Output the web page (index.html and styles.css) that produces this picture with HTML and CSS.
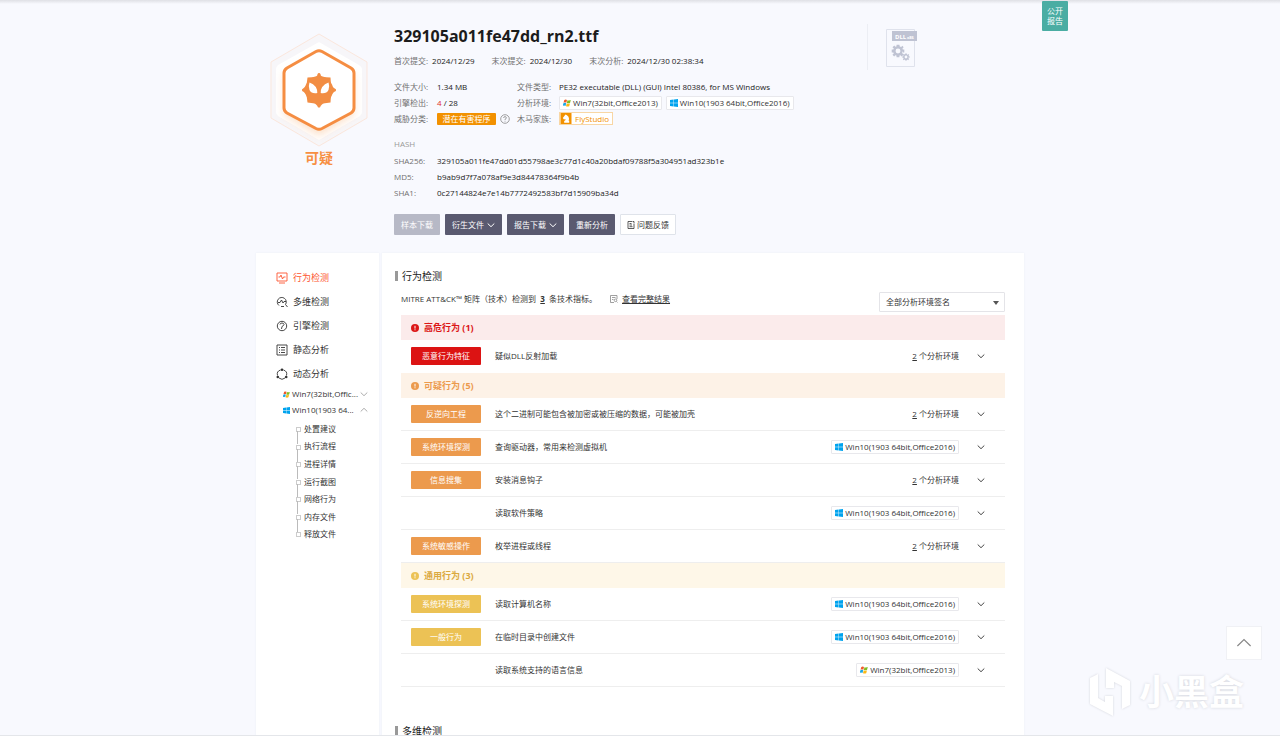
FILE: index.html
```html
<!DOCTYPE html>
<html lang="zh-CN">
<head>
<meta charset="utf-8">
<title>329105a011fe47dd_rn2.ttf</title>
<link rel="stylesheet" href="styles.css">
</head>
<body>
<svg class="defs" aria-hidden="true">
  <symbol id="down" viewBox="0 0 8 8"><path d="M.7 2.500 4 5.700 7.300 2.500" fill="none" stroke="currentColor"/></symbol>
  <symbol id="up" viewBox="0 0 8 8"><path d="M.7 5.500 4 2.300 7.300 5.500" fill="none" stroke="currentColor"/></symbol>
  <symbol id="w10" viewBox="0 0 8 8"><path fill="#00a3ee" d="M0 1.1 3.6.6V3.8H0zM4 .5 8 0V3.8H4zM0 4.2H3.6V7.4L0 6.9zM4 4.2H8V8L4 7.5z"/></symbol>
  <symbol id="w7" viewBox="0 0 8 8"><path fill="#f0582a" d="M1.3.9Q2.700 0 4 .9L3.300 3.700Q2 2.900.5 3.700z"/><path fill="#80bc22" d="M4.500 1.200Q6 1.900 7.800 1.100L7 3.900Q5.400 4.700 3.800 4z"/><path fill="#18a6e8" d="M.4 4.200Q1.900 3.400 3.200 4.200L2.500 7Q1.300 6.200-.3 7z"/><path fill="#fcb813" d="M3.700 4.500Q5.300 5.200 6.900 4.400L6.200 7.200Q4.600 8 3 7.200z"/></symbol>
  <symbol id="alert" viewBox="0 0 8 8"><circle cx="4" cy="4" r="4" fill="currentColor"/><path d="M4 1.800V4.600M4 5.300V6.300" stroke="#fff"/></symbol>
  <symbol id="gear" viewBox="-10 -10 20 20"><path fill-rule="evenodd" d="M-2-9H2L2.500-6.500 4.500-5.600 6.300-7.600 8-5.200 6.300-3.200 7-2H9V2H7L6-.1V3L7.900 5.200 5.200 7.900 3.500 6 2.200 6.600 2 9H-2L-2.300 6.600-3.800 6-5.500 7.900-7.900 5.500-6 3.700-6.700 2H-9V-2H-6.700L-6-3.700-7.900-5.300-5.300-7.900-3.700-6-2.300-6.600zM0-3.500A3.500 3.500 0 1 0 0 3.500 3.500 3.500 0 1 0 0-3.500z"/></symbol>
</svg>

<div class="page">
  <div class="wrap">
    <header class="summary">
      <div class="verdict">
        <svg class="hex" viewBox="0 0 102 120" aria-hidden="true">
          <defs><filter id="glow" x="-30%" y="-30%" width="160%" height="170%"><feGaussianBlur stdDeviation="4"/></filter></defs>
          <path d="M51 3 99 31V87L51 115 3 87V31z" fill="#f7f6f9" stroke="#fbe7dd"/>
          <path d="M51 11 91 34Q94 36 94 38V81Q94 83 92 85L51 109 10 85Q8 83 8 81V38Q8 36 10 34z" fill="#fff"/>
          <path d="M51 25 86 44V84L51 105 16 84V44z" fill="#fbd9bd" filter="url(#glow)" opacity=".8"/>
          <path d="M48 20.500Q51 19 54 20.500L83 37Q86 39 86 42V77Q86 80 83 82L54 97.500Q51 99 48 97.500L19 82Q16 80 16 77V42Q16 39 19 37z" fill="#fff" stroke="#f58d42" stroke-width="3"/>
          <path fill="#f28d43" d="M51 42 54 46 62.500 46.500 63 54 68 59 63 64 62.500 71.500 55 72.500 51 76.500 47 72.500 39.500 71.500 38.500 64 34 59 38.500 54 39.500 46.500 48 46z"/>
          <g fill="#f28d43"><circle cx="51" cy="59" r="14"/><circle cx="51" cy="43.500" r="1.500"/><circle cx="51" cy="75" r="1.500"/><circle cx="35.500" cy="59" r="1.500"/><circle cx="66.500" cy="59" r="1.500"/></g>
          <path d="M41.500 51.500Q49.500 54.500 49.300 62 43.500 63 41.500 59 40 55.500 41.500 51.500zM60.500 51.500Q52.500 54.500 52.700 62 58.500 63 60.500 59 62 55.500 60.500 51.500z" fill="#fff"/>
        </svg>
        <strong>可疑</strong>
      </div>
      <div class="info">
        <h1>329105a011fe47dd_rn2.ttf</h1>
        <dl class="dates">
          <div><dt>首次提交:</dt><dd>2024/12/29</dd></div>
          <div><dt>末次提交:</dt><dd>2024/12/30</dd></div>
          <div><dt>末次分析:</dt><dd>2024/12/30 02:38:34</dd></div>
        </dl>
        <dl class="facts">
          <dt>文件大小:</dt><dd>1.34 MB</dd>
          <dt>文件类型:</dt><dd>PE32 executable (DLL) (GUI) Intel 80386, for MS Windows</dd>
          <dt>引擎检出:</dt><dd><span class="hit">4</span> / 28</dd>
          <dt>分析环境:</dt><dd class="envs"><span class="env"><svg><use href="#w7"/></svg>Win7(32bit,Office2013)</span><span class="env"><svg><use href="#w10"/></svg>Win10(1903 64bit,Office2016)</span></dd>
          <dt>威胁分类:</dt><dd class="kind"><span class="pup">潜在有害程序</span><svg class="help" viewBox="0 0 10 10" aria-hidden="true"><circle cx="5" cy="5" r="4.300"/><path d="M3.600 4Q3.700 2.600 5 2.600T6.400 3.900Q6.400 4.700 5 5.300V6M5 6.800V7.600"/></svg></dd>
          <dt>木马家族:</dt><dd><span class="family"><svg viewBox="0 0 12 12" aria-hidden="true"><path fill="#f29100" d="M0 0H12V12H0z"/><path fill="#fff" d="M2.500 5.500 5.500 1.500 7 2.500Q9.300 3.500 9.300 6.500L8.800 8.500H9.500V10.500H4V8.500H5L5.500 6.500 3.800 7z"/></svg>FlyStudio</span></dd>
        </dl>
        <h2>HASH</h2>
        <dl class="hashes">
          <dt>SHA256:</dt><dd>329105a011fe47dd01d55798ae3c77d1c40a20bdaf09788f5a304951ad323b1e</dd>
          <dt>MD5:</dt><dd>b9ab9d7f7a078af9e3d84478364f9b4b</dd>
          <dt>SHA1:</dt><dd>0c27144824e7e14b7772492583bf7d15909ba34d</dd>
        </dl>
        <div class="actions">
          <button type="button" disabled>样本下载</button>
          <button type="button">衍生文件<svg><use href="#down"/></svg></button>
          <button type="button">报告下载<svg><use href="#down"/></svg></button>
          <button type="button">重新分析</button>
          <button type="button" class="plain"><svg viewBox="0 0 8 8" fill="none" stroke="currentColor" stroke-width=".8"><path d="M5 .5H1V7.500H7V3M2.500 2.500H4.500M2.500 4H5M2.500 5.700H5.500M5.500.5H7V2.500"/></svg>问题反馈</button>
        </div>
      </div>
      <div class="filetype">
        <svg viewBox="0 0 32 40" role="img" aria-label="DLL x86">
          <path d="M.5 1.500H28.500V38.500H.5z" fill="#f8f9fe" stroke="#dfe2ec"/>
          <path d="M6 3H31V13H6z" fill="#bfc3d3"/>
          <text x="9" y="10.500" class="dll">DLL</text><text x="21" y="10.500" class="arch">x86</text>
          <g fill="#bfc3d3"><use href="#gear" x="5" y="16" width="14" height="14"/><use href="#gear" x="16" y="25" width="8" height="8"/></g>
        </svg>
      </div>
    </header>

    <div class="body">
      <nav class="side">
        <a class="item on" href="#behavior"><svg viewBox="0 0 12 12"><path d="M1 1H11V9H1zM3 11H9M2.500 5H4L5 3 6.500 7 7.500 5H9.500"/></svg>行为检测</a>
        <a class="item" href="#multi"><svg viewBox="0 0 12 12"><path d="M3 9.500A4.500 4.500 0 1 1 9.500 8.500L11.500 11M2 6.500H4L5.500 4 7 7 8 5.500H10M5 10.500H8"/></svg>多维检测</a>
        <a class="item" href="#engine"><svg viewBox="0 0 12 12"><circle cx="6" cy="6" r="4.700"/><path d="M4 4.500Q4.200 3 6 3T8 4.500Q8 5.500 6 6.500L5.500 9"/></svg>引擎检测</a>
        <a class="item" href="#static"><svg viewBox="0 0 12 12"><path d="M1 1H11V11H1zM3 3.500H4M3 6H4M3 8.500H4M5 3.500H9M5 6H9M5 8.500H9"/></svg>静态分析</a>
        <a class="item" href="#dynamic"><svg viewBox="0 0 12 12"><path d="M4.500 2A4.500 4.500 0 0 0 1.500 7.500M7.500 2A4.500 4.500 0 0 1 10.500 7.500M3 10A4.500 4.500 0 0 0 9 10"/><g fill="currentColor" stroke="none"><circle cx="6" cy="1.800" r="1.300"/><circle cx="1.800" cy="9" r="1.300"/><circle cx="10.200" cy="9" r="1.300"/></g></svg>动态分析</a>
        <a class="os" href="#win7"><svg><use href="#w7"/></svg><span>Win7(32bit,Offic...</span><svg class="fold"><use href="#down"/></svg></a>
        <a class="os" href="#win10"><svg><use href="#w10"/></svg><span>Win10(1903 64...</span><svg class="fold"><use href="#up"/></svg></a>
        <ul class="tree">
          <li><a href="#a">处置建议</a></li><li><a href="#b">执行流程</a></li><li><a href="#c">进程详情</a></li><li><a href="#d">运行截图</a></li><li><a href="#e">网络行为</a></li><li><a href="#f">内存文件</a></li><li><a href="#g">释放文件</a></li>
        </ul>
      </nav>

      <main class="main">
        <h3 id="behavior">行为检测</h3>
        <div class="mitre">
          <p>MITRE ATT&amp;CK™ 矩阵（技术）检测到&nbsp; <b>3</b> &nbsp;条技术指标。</p>
          <a href="#matrix"><svg viewBox="0 0 8 8" fill="none" stroke="#888" stroke-width=".8"><path d="M7 4V.5H.5V7.500H4M2 2.500H5.500M2 4.500H3.500M5.500 4A1.300 1.300 0 1 0 5.500 6.600 1.300 1.300 0 1 0 5.500 4M6.500 6.500 7.500 7.500"/></svg><span>查看完整结果</span></a>
          <label class="pick"><select aria-label="分析环境签名"><option>全部分析环境签名</option></select></label>
        </div>

        <section class="high">
          <h4><svg><use href="#alert"/></svg>高危行为 (1)</h4>
          <div class="row"><span class="tag">恶意行为特征</span><p>疑似DLL反射加载</p><span class="count"><u>2</u> 个分析环境</span><button type="button" aria-label="展开"><svg><use href="#down"/></svg></button></div>
        </section>
        <section class="mid">
          <h4><svg><use href="#alert"/></svg>可疑行为 (5)</h4>
          <div class="row"><span class="tag">反逆向工程</span><p>这个二进制可能包含被加密或被压缩的数据，可能被加壳</p><span class="count"><u>2</u> 个分析环境</span><button type="button" aria-label="展开"><svg><use href="#down"/></svg></button></div>
          <div class="row"><span class="tag">系统环境探测</span><p>查询驱动器，常用来检测虚拟机</p><span class="env"><svg><use href="#w10"/></svg>Win10(1903 64bit,Office2016)</span><button type="button" aria-label="展开"><svg><use href="#down"/></svg></button></div>
          <div class="row"><span class="tag">信息搜集</span><p>安装消息钩子</p><span class="count"><u>2</u> 个分析环境</span><button type="button" aria-label="展开"><svg><use href="#down"/></svg></button></div>
          <div class="row"><p>读取软件策略</p><span class="env"><svg><use href="#w10"/></svg>Win10(1903 64bit,Office2016)</span><button type="button" aria-label="展开"><svg><use href="#down"/></svg></button></div>
          <div class="row"><span class="tag">系统敏感操作</span><p>枚举进程或线程</p><span class="count"><u>2</u> 个分析环境</span><button type="button" aria-label="展开"><svg><use href="#down"/></svg></button></div>
        </section>
        <section class="low">
          <h4><svg><use href="#alert"/></svg>通用行为 (3)</h4>
          <div class="row"><span class="tag">系统环境探测</span><p>读取计算机名称</p><span class="env"><svg><use href="#w10"/></svg>Win10(1903 64bit,Office2016)</span><button type="button" aria-label="展开"><svg><use href="#down"/></svg></button></div>
          <div class="row"><span class="tag">一般行为</span><p>在临时目录中创建文件</p><span class="env"><svg><use href="#w10"/></svg>Win10(1903 64bit,Office2016)</span><button type="button" aria-label="展开"><svg><use href="#down"/></svg></button></div>
          <div class="row"><p>读取系统支持的语言信息</p><span class="env"><svg><use href="#w7"/></svg>Win7(32bit,Office2013)</span><button type="button" aria-label="展开"><svg><use href="#down"/></svg></button></div>
        </section>
        <h3 id="multi" class="next">多维检测</h3>
      </main>
    </div>
  </div>
</div>
<div class="edge"></div>

<div class="ribbon">公开<br>报告</div>
<button type="button" class="totop" aria-label="返回顶部"><svg><use href="#up"/></svg></button>
<div class="mark">
  <svg viewBox="0 0 44 52" aria-hidden="true"><path d="M2 11 10 7V31L17 35V29H25V49L2 37zM18 1 42 14V38L34 42V19L26 15V21H18z"/></svg>
  <span>小黑盒</span>
</div>
</body>
</html>
```

FILE: styles.css
```css
* { box-sizing: border-box; margin: 0; padding: 0; }

body {
  height: 100vh;
  display: flex;
  flex-direction: column;
  overflow: hidden;
  background: #f8f9fe;
  color: #333;
  font: 8px/12px "Open Sans", "Noto Sans CJK SC", sans-serif;
}

a { color: inherit; text-decoration: none; }
ul { list-style: none; }
svg { width: 8px; height: 8px; flex: none; display: block; }
button, select { font: inherit; color: inherit; border: 0; background: none; }
.defs { position: absolute; width: 0; height: 0; }

.page {
  flex: 1;
  min-height: 0;
  overflow: hidden;
  background: linear-gradient(#dfe0e5, #f8f9fe 4px);
}
.edge { height: 2px; background: #fff; border-top: 1px solid #e4e6ea; }
.wrap { width: 60%; min-width: 740px; margin: 0 auto; }

/* Sample summary */
.summary { display: flex; padding: 24px 0 18px; }
.verdict {
  width: 126px;
  margin-right: 12px;
  padding-top: 7px;
  display: flex;
  flex-direction: column;
  align-items: center;
}
.hex { width: 102px; height: 120px; }
.verdict strong { font-size: 14px; line-height: 14px; color: #f78f42; }
.info { flex: 1; }
h1 { font-size: 16px; line-height: 24px; color: #1c1c1c; }
dt { color: #707070; }
dd { color: #222; }
.dates { display: flex; gap: 17px; margin-top: 7px; }
.dates div { display: flex; gap: 4px; }
.facts {
  display: grid;
  grid-template-columns: 43px 80px 42px 1fr;
  grid-auto-rows: 16px;
  align-items: center;
  margin-top: 12px;
}
.hit { color: #e02c2c; }
.envs, .kind { display: flex; gap: 4px; align-items: center; }
.env {
  display: inline-flex;
  align-items: center;
  gap: 2px;
  height: 14px;
  padding: 0 3px;
  border: 1px solid #e8e8ec;
  border-radius: 1px;
  background: #fff;
  color: #333;
  white-space: nowrap;
}
.pup { width: 59px; text-align: center; background: #f29100; color: #fff; border-radius: 1px; }
.help { width: 10px; height: 10px; fill: none; stroke: #888; stroke-width: .8; }
.family {
  display: inline-flex;
  gap: 3px;
  padding-right: 3px;
  border: 1px solid #f8d6a4;
  color: #f29100;
  background: #fff;
  line-height: 11px;
}
.family svg { width: 12px; height: 11px; }
h2 { font-size: 8px; line-height: 12px; font-weight: 400; color: #999; margin: 11px 0 3px; }
.hashes { display: grid; grid-template-columns: 43px 1fr; grid-auto-rows: 16px; align-items: center; }
.actions { display: flex; gap: 5px; margin-top: 13px; }
.actions button {
  display: flex;
  align-items: center;
  gap: 3px;
  height: 21px;
  padding: 0 7px;
  background: #5a5a70;
  color: #fff;
  border-radius: 1px;
  white-space: nowrap;
}
.actions button:disabled { background: #b7b9c6; }
.actions .plain { padding: 0 6px; background: #fff; color: #333; border: 1px solid #dfe3ea; gap: 2px; }
.filetype { width: 157px; height: 46px; padding: 4px 0 0 18px; border-left: 1px solid #eceef4; }
.filetype svg { width: 32px; height: 40px; }
.dll { font: 700 6px "Open Sans", sans-serif; fill: #fff; }
.arch { font: 700 4px "Open Sans", sans-serif; fill: #fff; }

/* Report */
.body { display: flex; gap: 3px; }
.side, .main { background: #fff; box-shadow: 0 0 2px #eceef6; min-height: 500px; }
.side { width: 123px; padding-top: 13px; }
.item {
  display: flex;
  align-items: center;
  gap: 5px;
  height: 24px;
  padding-left: 20px;
  font-size: 9px;
  color: #333;
}
.item svg { width: 12px; height: 12px; fill: none; stroke: currentColor; stroke-width: .9; }
.item.on { color: #fd5631; }
.os { display: flex; align-items: center; gap: 2px; height: 16px; padding: 0 11px 0 27px; color: #333; }
.os span { flex: 1; white-space: nowrap; }
.os svg { width: 7px; height: 7px; }
.os .fold { width: 8px; height: 8px; color: #888; stroke-width: .7; }
.tree {
  height: 123px;
  margin: 2px 0 0 40px;
  display: flex;
  flex-direction: column;
}
.tree li { position: relative; flex: 1; display: flex; align-items: center; padding-left: 8px; color: #333; }
.tree li::before {
  content: "";
  position: absolute;
  left: 0;
  top: 7px;
  width: 3px;
  height: 3px;
  border: 1px solid #ccc;
}
.tree li:not(:last-child)::after {
  content: "";
  position: absolute;
  left: 1px;
  top: 11px;
  width: 1px;
  height: 13px;
  background: #bbb;
}

.main { flex: 1; padding: 16px 19px 0 13px; }
h3 {
  display: flex;
  align-items: center;
  gap: 4px;
  font-size: 10px;
  line-height: 14px;
  font-weight: 400;
  color: #222;
}
h3::before { content: ""; width: 3px; height: 10px; background: #999; }
.mitre { display: flex; align-items: center; gap: 13px; margin: 9px 0 3px 6px; height: 20px; }
.mitre p { margin-top: -6px; }
.mitre b { text-decoration: underline; }
.mitre > a { display: flex; align-items: center; gap: 4px; margin-top: -6px; text-decoration: underline; }
.pick { position: relative; margin-left: auto; width: 126px; }
.pick select {
  width: 100%;
  height: 20px;
  padding: 0 6px;
  appearance: none;
  border: 1px solid #e4e4e8;
  border-radius: 1px;
  background: #fff;
}
.pick::after {
  content: "";
  position: absolute;
  right: 6px;
  top: 9px;
  border: 3px solid transparent;
  border-top: 4px solid #555;
  border-bottom: 0;
  pointer-events: none;
}
section { margin-left: 6px; }
h4 { display: flex; align-items: center; gap: 5px; height: 25px; padding-left: 10px; font-size: 9px; }
.high h4 { background: #fbebeb; color: #dc1717; }
.mid h4 { background: #fdf2e7; color: #ec9a4d; }
.low h4 { background: #fef7e8; color: #dba93f; }
.high .tag { background: #dc1313; }
.mid .tag { background: #ec9a4d; }
.low .tag { background: #ecc255; }
.low h4 svg { color: #ecc255; }
.row {
  display: grid;
  grid-template-columns: 70px 1fr auto 8px;
  align-items: center;
  height: 33px;
  padding: 0 20px 0 10px;
  border-bottom: 1px solid #eee;
}
.high .row { border-color: #fff; }
.tag { height: 18px; line-height: 18px; text-align: center; color: #fff; border-radius: 1px; }
.row p { grid-column: 2; padding-left: 14px; }
.row button { width: 8px; color: #444; }
.row .count, .row .env { margin-right: 18px; }
.next { margin-top: 37px; }

/* Floating pieces */
.ribbon {
  position: absolute;
  right: 212px;
  top: 1px;
  width: 26px;
  padding: 5px 0;
  line-height: 10px;
  text-align: center;
  color: #fff;
  background: #4aada3;
  border-radius: 1px;
}
.totop {
  position: absolute;
  right: 18px;
  bottom: 77px;
  width: 36px;
  height: 34px;
  display: grid;
  place-items: center;
  background: #fff;
  border: 1px solid #f0f1f5;
  color: #888;
}
.totop svg { width: 16px; height: 16px; stroke-width: .6; }
.mark {
  position: absolute;
  right: 36px;
  bottom: 18px;
  display: flex;
  align-items: center;
  gap: 7px;
  color: #fff;
  font: 700 35px/46px "Noto Sans CJK SC", sans-serif;
  text-shadow: 0 0 3px #d3d5dc;
}
.mark span { padding-bottom: 6px; }
.mark svg { width: 44px; height: 52px; fill: #fff; filter: drop-shadow(0 0 1px #d3d5dc); }
```
